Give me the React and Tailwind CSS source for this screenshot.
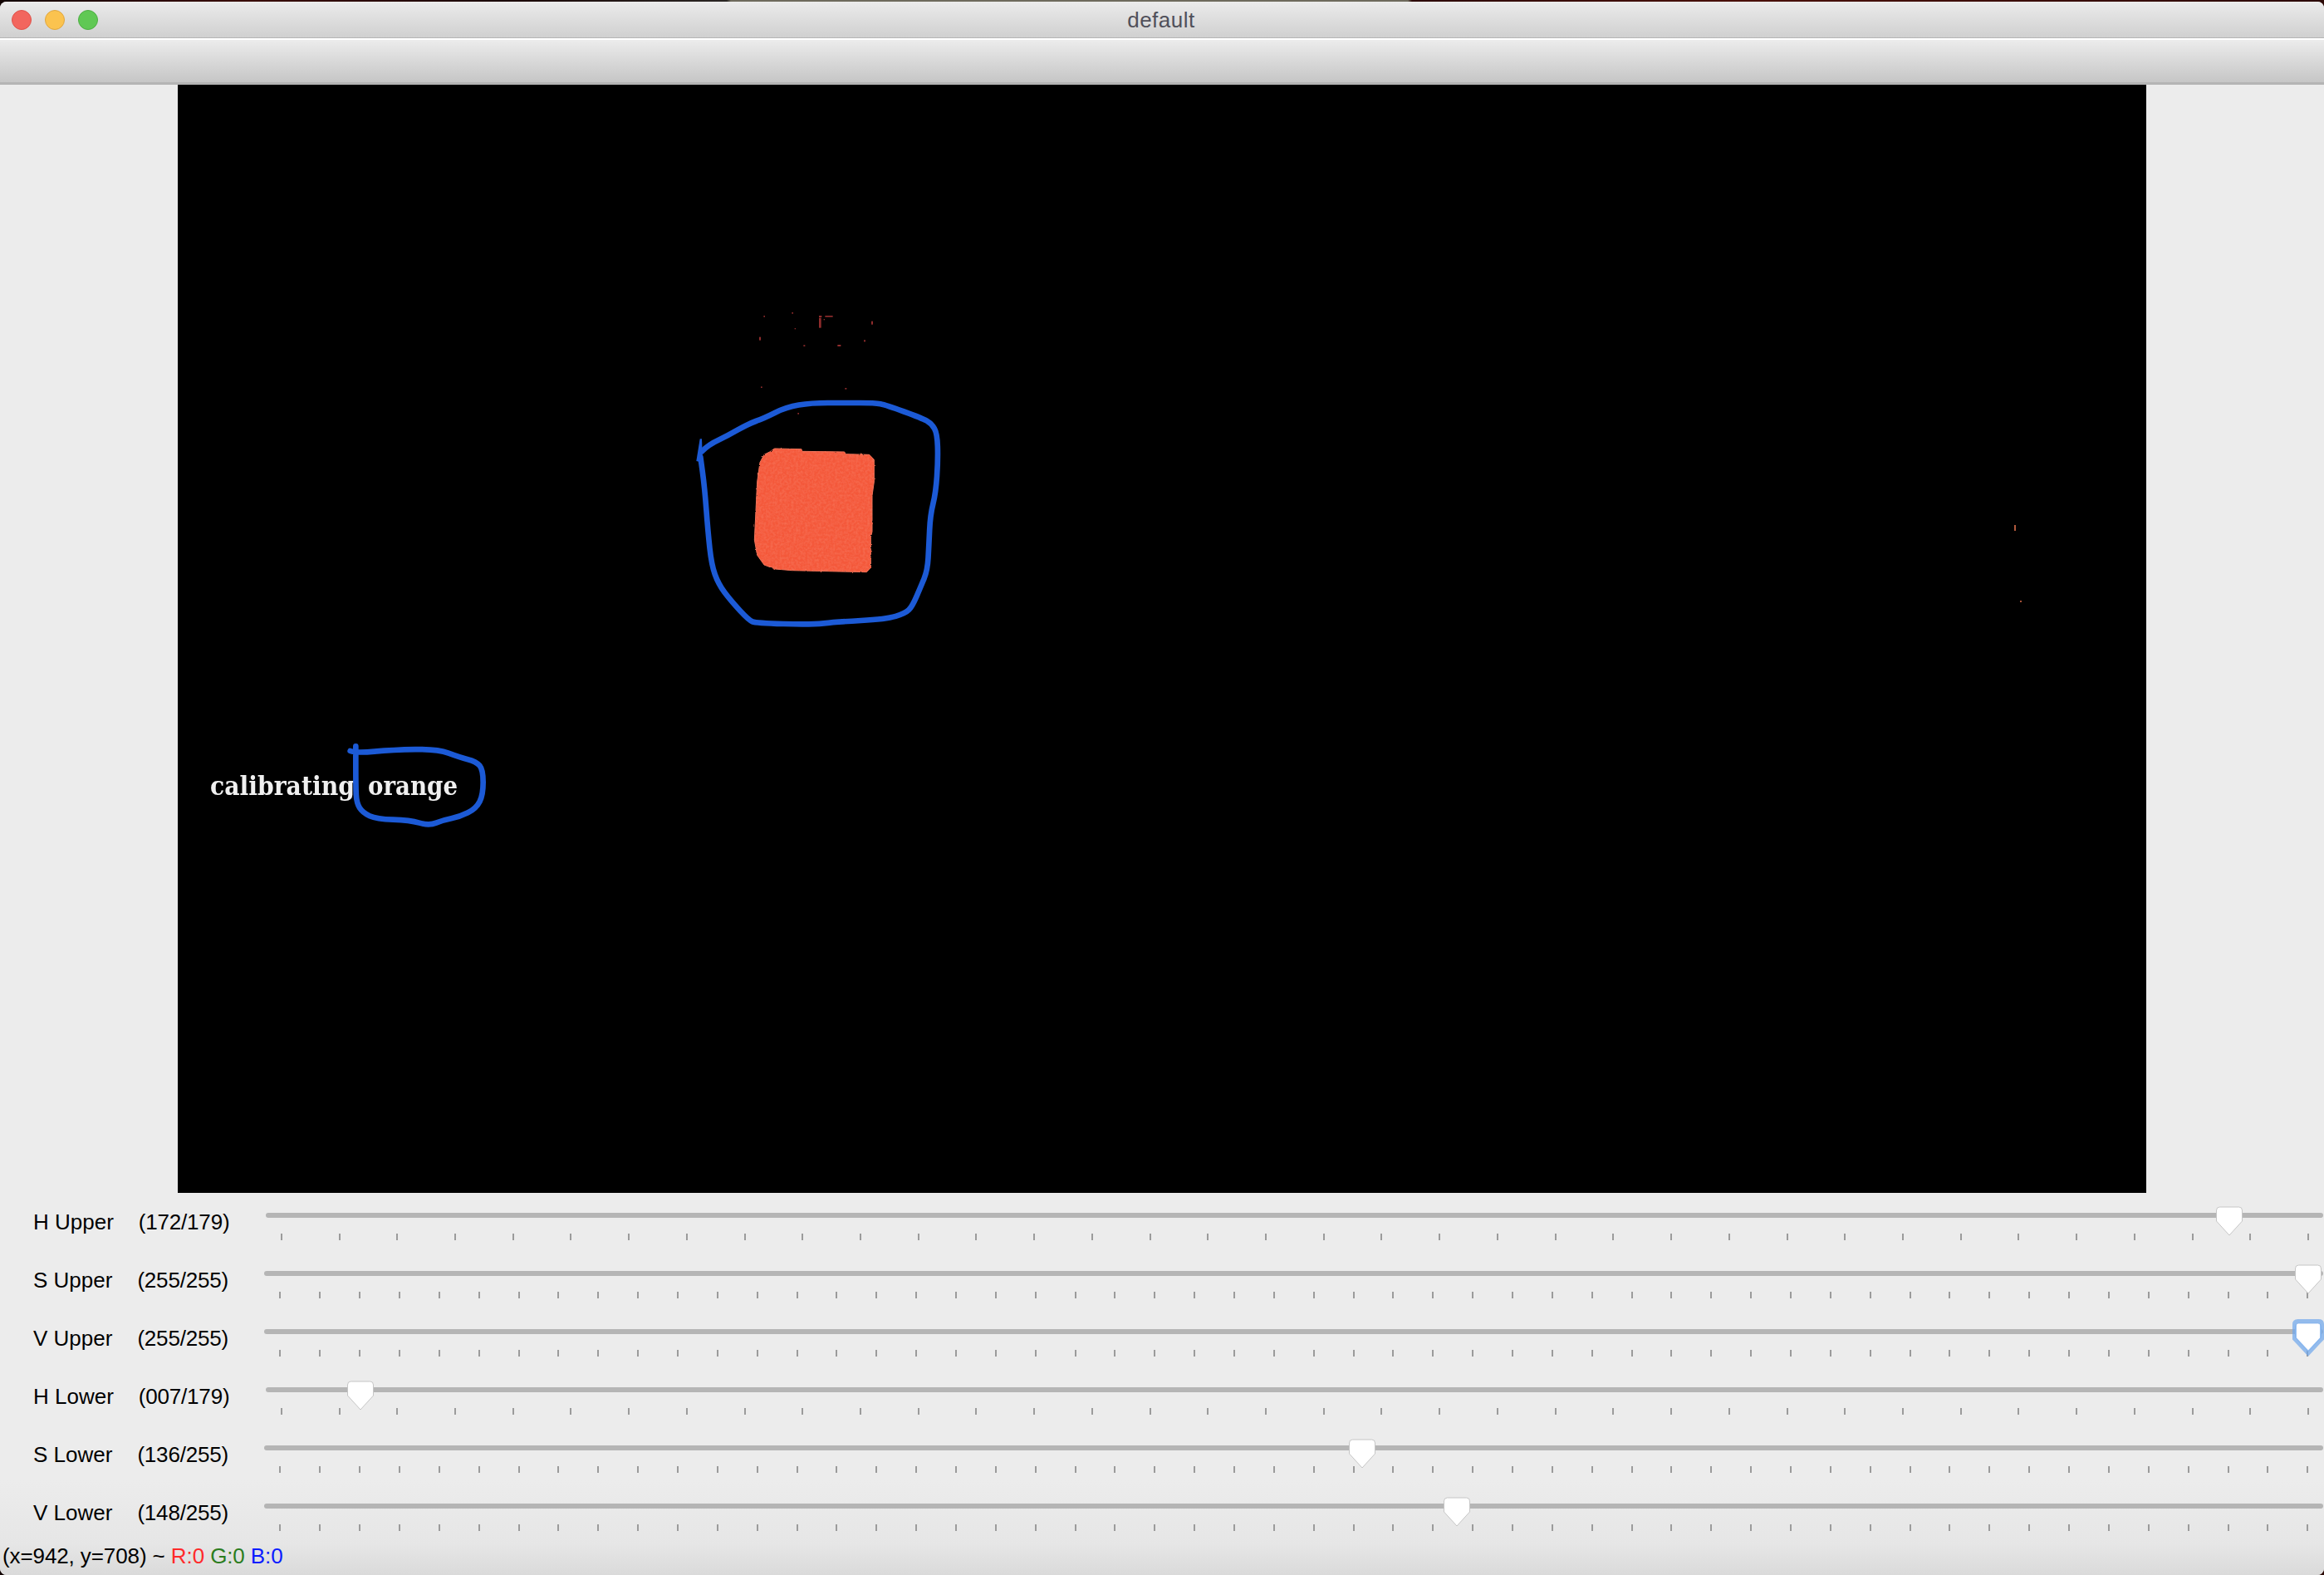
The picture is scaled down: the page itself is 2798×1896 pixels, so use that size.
import React from 'react';

const sliders = [
  { label: 'H Upper', value: 172, max: 179, ticks: 36 },
  { label: 'S Upper', value: 255, max: 255, ticks: 52 },
  { label: 'V Upper', value: 255, max: 255, ticks: 52, focused: true },
  { label: 'H Lower', value: 7, max: 179, ticks: 36 },
  { label: 'S Lower', value: 136, max: 255, ticks: 52 },
  { label: 'V Lower', value: 148, max: 255, ticks: 52 },
];

// points were read off zoomed crops, so they stay in crop coordinates
const bigLoop = [
  [135, 610], [160, 585], [230, 553], [300, 512], [360, 490], [440, 450], [530, 435], [650, 435], [760, 435], [800, 443],
  [930, 490], [965, 510], [985, 545], [988, 640], [980, 760], [960, 840], [955, 950], [950, 1040], [925, 1100], [895, 1170],
  [870, 1195], [800, 1216], [620, 1226], [530, 1236], [330, 1230], [305, 1220], [240, 1150], [195, 1090], [170, 1020],
  [157, 900], [145, 740], [130, 630],
];

const smallLoop = [
  [605, 72], [625, 80], [760, 68], [920, 65], [1000, 95], [1060, 110], [1085, 140], [1085, 230], [1060, 280], [1000, 310],
  [940, 322], [890, 342], [820, 322], [700, 318], [650, 295], [628, 260], [625, 200], [625, 55],
];

const patch = 'M398 600 L495 602 L497 610 L650 612 L655 620 L740 622 L757 640 L757 720 L750 770 L750 900 L745 920 L745 1030 L730 1046 L630 1044 L460 1040 L400 1035 L360 1020 L335 985 L325 930 L335 720 L345 650 L360 622 L380 612 Z';

const specks = [
  [358, 120, 5, 5], [460, 108, 5, 5], [558, 120, 10, 6], [558, 128, 8, 36], [580, 120, 28, 5], [575, 132, 4, 4],
  [747, 140, 6, 12], [470, 165, 4, 4], [342, 197, 6, 12], [502, 226, 6, 5], [625, 225, 12, 6], [720, 208, 6, 6],
  [348, 376, 5, 5], [652, 381, 6, 5], [481, 471, 5, 5],
];

const smooth = (pts) => {
  let d = `M${pts[0][0]} ${pts[0][1]}`;
  for (let i = 1; i < pts.length - 1; i++) {
    const mx = (pts[i][0] + pts[i + 1][0]) / 2;
    const my = (pts[i][1] + pts[i + 1][1]) / 2;
    d += ` Q${pts[i][0]} ${pts[i][1]} ${mx} ${my}`;
  }
  const last = pts[pts.length - 1];
  return `${d} L${last[0]} ${last[1]}`;
};

const Thumb = ({ value, max, focused }) => (
  <div className="absolute left-[19px] right-[18px] top-[9px]">
    <svg
      width="33"
      height="37"
      viewBox="0 0 33 37"
      className="absolute -translate-x-1/2 overflow-visible"
      style={{ left: `${(value / max) * 100}%` }}
    >
      <path
        d="M5 1 H28 Q32 1 32 5 V18 L16.5 35 L1 18 V5 Q1 1 5 1 Z"
        fill="#ffffff"
        stroke={focused ? '#a9c8f0' : '#c6c6c6'}
        strokeWidth="1"
      />
      {focused && (
        <path
          d="M4 -1.5 H29 Q33 -1.5 33 2.5 V19.5 L16.5 37 L0 19.5 V2.5 Q0 -1.5 4 -1.5 Z"
          fill="none"
          stroke="#6ea6ec"
          strokeOpacity="0.7"
          strokeWidth="5"
        />
      )}
    </svg>
  </div>
);

const SliderRow = ({ label, value, max, ticks, focused }) => (
  <div className="flex h-[70px] items-start pl-[40px] text-[26px] leading-[30px] text-black">
    <span className="pt-[13px]">{label}</span>
    <span className="ml-[30px] w-[111px] pt-[13px] tracking-[-0.2px]">({String(value).padStart(3, '0')}/{max})</span>
    <div className="relative ml-[42px] mr-px flex-1 pt-[17px]">
      <div className="h-[6px] rounded-[3px] bg-[#b5b5b5]" />
      <div className="mt-[19px] flex justify-between pl-[18px] pr-[17px]">
        {Array.from({ length: ticks }, (_, i) => (
          <div key={i} className="h-[8px] w-[2px] bg-[#9b9b9b]" />
        ))}
      </div>
      <Thumb value={value} max={max} focused={focused} />
    </div>
  </div>
);

const Frame = () => (
  <svg className="absolute inset-0" width="2370" height="1334" viewBox="214 102 2370 1334">
    <defs>
      <filter id="rough" x="-5%" y="-5%" width="110%" height="110%">
        <feTurbulence type="fractalNoise" baseFrequency="0.12" numOctaves="2" seed="4" result="noise" />
        <feDisplacementMap in="SourceGraphic" in2="noise" scale="7" result="edge" />
        <feColorMatrix
          in="noise"
          type="matrix"
          values="0 0 0 0 1  0 0 0 0 0.42  0 0 0 0 0.28  0 0 0 0.3 -0.1"
          result="mottle"
        />
        <feComposite in="mottle" in2="edge" operator="in" result="spots" />
        <feMerge>
          <feMergeNode in="edge" />
          <feMergeNode in="spots" />
        </feMerge>
      </filter>
    </defs>
    <g transform="translate(800 340) scale(0.33333)">
      {specks.map(([x, y, w, h], i) => (
        <rect key={i} x={x} y={y} width={w} height={h} fill="#8f2c2c" />
      ))}
      <path d={patch} fill="#f4583b" stroke="#ef6f55" strokeWidth="3" strokeLinejoin="round" filter="url(#rough)" />
      <path d={smooth(bigLoop)} fill="none" stroke="#1c5ad6" strokeWidth="20" strokeLinecap="round" strokeLinejoin="round" />
      <path d="M115 645 L128 565 L135 565 L138 650 Z" fill="#1c5ad6" />
    </g>
    <rect x="2425" y="632" width="2" height="7" fill="#b0583c" />
    <rect x="2432" y="723" width="2" height="2" fill="#a85238" />
    <text fill="#f0f0f0" className="font-['DejaVu_Serif',serif] text-[31px] font-bold blur-[0.7px]">
      <tspan x="253" y="957" textLength="174" lengthAdjust="spacingAndGlyphs">calibrating</tspan>
      <tspan x="443" y="957" textLength="108" lengthAdjust="spacingAndGlyphs">orange</tspan>
    </text>
    <g transform="translate(220 880) scale(0.33333)">
      <path d={smooth(smallLoop)} fill="none" stroke="#1c5ad6" strokeWidth="20" strokeLinecap="round" strokeLinejoin="round" />
    </g>
  </svg>
);

export default function App() {
  return (
    <div className="h-[1896px] w-full overflow-hidden bg-[linear-gradient(to_right,#120403_0,#3a0d08_300px,#1a0605_600px,#2a2624_875px,#6e6a5c_880px,#6e6a5c_1695px,#2c0a06_1700px,#4a100a_2100px,#2c0a06_2798px)] pt-[2px] font-['Liberation_Sans',Arial,sans-serif]">
      <div className="flex h-[1894px] flex-col overflow-hidden rounded-[8px] bg-[#ececec]">
        <div className="grid h-[44px] shrink-0 grid-cols-[1fr_auto_1fr] items-center border-b border-[#b4b4b4] bg-linear-to-b from-[#ebebeb] to-[#d0d0d0] pl-[14px]">
          <div className="flex gap-[16px]">
            <div className="h-[24px] w-[24px] rounded-full border border-[#e0524a] bg-[#f2665e]" />
            <div className="h-[24px] w-[24px] rounded-full border border-[#e0a63e] bg-[#fbc34f]" />
            <div className="h-[24px] w-[24px] rounded-full border border-[#4cae42] bg-[#60c854]" />
          </div>
          <span className="-translate-x-[8px] text-[26px] leading-[30px] tracking-[0.5px] text-[#50505a]">default</span>
          <div />
        </div>
        <div className="h-[56px] shrink-0 border-t-2 border-b-[3px] border-t-white border-b-[#b4b4b4] bg-linear-to-b from-[#ececec] to-[#c6c6c6]" />
        <div className="flex shrink-0 justify-center">
          <div className="relative h-[1334px] w-[2370px] bg-black">
            <Frame />
          </div>
        </div>
        <div className="flex-1 bg-[linear-gradient(to_bottom,#ececec_0%,#ececec_75%,#e6e6e6_92%,#dadada_100%)] pt-[7px]">
          {sliders.map((s) => (
            <SliderRow key={s.label} {...s} />
          ))}
          <div className="pl-[3px] text-[26px] leading-[20px] tracking-[-0.1px] text-black">
            (x=942, y=708) ~ <span className="text-[#ff2a2a]">R:0</span>{' '}
            <span className="text-[#2b7d1e]">G:0</span>{' '}
            <span className="text-[#0b1cff]">B:0</span>
          </div>
        </div>
      </div>
    </div>
  );
}
